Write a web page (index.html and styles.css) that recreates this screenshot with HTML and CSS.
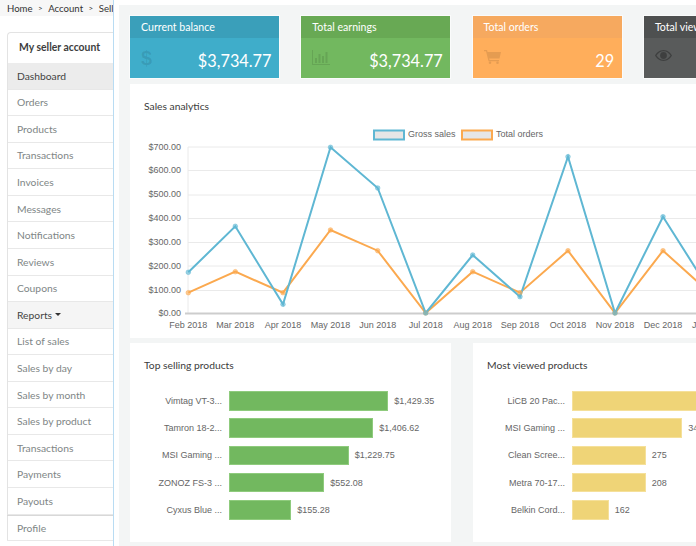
FILE: index.html
```html
<!DOCTYPE html>
<html lang="en">
<head>
<meta charset="utf-8">
<title>Seller dashboard</title>
<link rel="stylesheet" href="styles.css">
</head>
<body>
<div class="page">
  <aside class="side">
    <nav class="crumbs"><span>Home</span><i>&gt;</i><span>Account</span><i>&gt;</i><span>Sell</span></nav>
    <div class="menu">
      <h2 class="menu-head">My seller account</h2>
      <a class="item active">Dashboard</a>
      <a class="item">Orders</a>
      <a class="item">Products</a>
      <a class="item">Transactions</a>
      <a class="item">Invoices</a>
      <a class="item">Messages</a>
      <a class="item">Notifications</a>
      <a class="item">Reviews</a>
      <a class="item">Coupons</a>
      <a class="item group">Reports<b class="caret"></b></a>
      <a class="item">List of sales</a>
      <a class="item">Sales by day</a>
      <a class="item">Sales by month</a>
      <a class="item">Sales by product</a>
      <a class="item">Transactions</a>
      <a class="item">Payments</a>
      <a class="item">Payouts</a>
      <a class="item split">Profile</a>
    </div>
  </aside>
  <main class="main">
    <section class="cards">
      <div class="card blue">
        <div class="card-head">Current balance</div>
        <div class="card-body"><span class="dollar">$</span><span class="val">$3,734.77</span></div>
      </div>
      <div class="card green">
        <div class="card-head">Total earnings</div>
        <div class="card-body">
          <svg class="ico" width="18" height="15" viewBox="0 0 18 15"><path d="M0 0h1v14h17v1H0z M3 8h2v5H3z M6.5 4h2v9h-2z M10 6h2v7h-2z M13.500 2h2v11h-2z"/></svg>
          <span class="val">$3,734.77</span>
        </div>
      </div>
      <div class="card orange">
        <div class="card-head">Total orders</div>
        <div class="card-body">
          <svg class="ico" width="17" height="14" viewBox="0 0 17 14"><path d="M0 0h3l.6 2H17l-1.500 6.500H5.200l.4 1.500H15v1.200H4.500L2 1.300H0z"/><circle cx="6" cy="12.700" r="1.300"/><circle cx="13.500" cy="12.700" r="1.300"/></svg>
          <span class="val">29</span>
        </div>
      </div>
      <div class="card dark">
        <div class="card-head">Total view</div>
        <div class="card-body">
          <svg class="ico" width="17" height="11" viewBox="0 0 17 11"><path fill-rule="evenodd" d="M8.500 0C12.500 0 15.500 2.800 17 5.500 15.500 8.200 12.500 11 8.500 11S1.500 8.200 0 5.500C1.500 2.800 4.500 0 8.500 0zM8.500 1.200C5.400 1.200 3 3.300 1.500 5.500 3 7.700 5.400 9.800 8.500 9.800s5.500-2.100 7-4.300C14 3.300 11.600 1.200 8.500 1.200z"/><circle cx="8.500" cy="5.500" r="3.400"/></svg>
        </div>
      </div>
    </section>

    <section class="panel analytics">
      <h3 class="panel-title">Sales analytics</h3>
      <svg class="chart" width="566" height="214" viewBox="130 124 566 214">
        <g class="grid">
          <path d="M188 147H696M188 170.500H696M188 195H696M188 218.500H696M188 242.500H696M188 266H696M188 290.500H696M188 147V313"/>
        </g>
        <path class="axis" d="M185 313.500H696"/>
        <g class="legend">
          <rect class="box-b" x="374" y="130.500" width="30" height="9"/>
          <text x="408" y="137">Gross sales</text>
          <rect class="box-o" x="462" y="130.500" width="30" height="9"/>
          <text x="496" y="137">Total orders</text>
        </g>
        <g class="ylab">
          <text x="181" y="149.500">$700.00</text>
          <text x="181" y="173">$600.00</text>
          <text x="181" y="197">$500.00</text>
          <text x="181" y="221">$400.00</text>
          <text x="181" y="244.500">$300.00</text>
          <text x="181" y="268.500">$200.00</text>
          <text x="181" y="292.500">$100.00</text>
          <text x="181" y="316">$0.00</text>
        </g>
        <g class="xlab">
          <text x="188.300" y="327.500">Feb 2018</text>
          <text x="235.300" y="327.500">Mar 2018</text>
          <text x="283" y="327.500">Apr 2018</text>
          <text x="330.500" y="327.500">May 2018</text>
          <text x="377.700" y="327.500">Jun 2018</text>
          <text x="425.700" y="327.500">Jul 2018</text>
          <text x="472.700" y="327.500">Aug 2018</text>
          <text x="520" y="327.500">Sep 2018</text>
          <text x="568" y="327.500">Oct 2018</text>
          <text x="615" y="327.500">Nov 2018</text>
          <text x="663" y="327.500">Dec 2018</text>
          <text x="692" y="327.500" class="edge">J</text>
        </g>
        <polyline class="l-o" points="188.300,292.700 235.300,271.700 283,292.700 330.500,230 377.700,250.700 425.700,313 472.700,271.700 520,292.700 568,250.700 615,313 663,250.700 710,293"/>
        <polyline class="l-b" points="188.300,272.300 235.300,226.300 283,304.300 330.500,147.300 377.700,188 425.700,313 472.700,255 520,296.700 568,156.700 615,313 663,216.700 710,291"/>
        <g class="p-o">
          <circle cx="188.300" cy="292.700" r="2.300"/><circle cx="235.300" cy="271.700" r="2.300"/><circle cx="283" cy="292.700" r="2.300"/><circle cx="330.500" cy="230" r="2.300"/><circle cx="377.700" cy="250.700" r="2.300"/><circle cx="425.700" cy="313" r="2.300"/><circle cx="472.700" cy="271.700" r="2.300"/><circle cx="520" cy="292.700" r="2.300"/><circle cx="568" cy="250.700" r="2.300"/><circle cx="615" cy="313" r="2.300"/><circle cx="663" cy="250.700" r="2.300"/>
        </g>
        <g class="p-b">
          <circle cx="188.300" cy="272.300" r="2.300"/><circle cx="235.300" cy="226.300" r="2.300"/><circle cx="283" cy="304.300" r="2.300"/><circle cx="330.500" cy="147.300" r="2.300"/><circle cx="377.700" cy="188" r="2.300"/><circle cx="425.700" cy="313" r="2.300"/><circle cx="472.700" cy="255" r="2.300"/><circle cx="520" cy="296.700" r="2.300"/><circle cx="568" cy="156.700" r="2.300"/><circle cx="615" cy="313" r="2.300"/><circle cx="663" cy="216.700" r="2.300"/>
        </g>
      </svg>
    </section>

    <section class="lower">
      <div class="panel rank">
        <h3 class="panel-title wide">Top selling products</h3>
        <div class="bars">
          <div class="bar-row"><span class="lab">Vimtag VT-3...</span><span class="bar g" style="width:159px"></span><span class="num">$1,429.35</span></div>
          <div class="bar-row"><span class="lab">Tamron 18-2...</span><span class="bar g" style="width:144px"></span><span class="num">$1,406.62</span></div>
          <div class="bar-row"><span class="lab">MSI Gaming ...</span><span class="bar g" style="width:119.500px"></span><span class="num">$1,229.75</span></div>
          <div class="bar-row"><span class="lab">ZONOZ FS-3 ...</span><span class="bar g" style="width:95px"></span><span class="num">$552.08</span></div>
          <div class="bar-row"><span class="lab">Cyxus Blue ...</span><span class="bar g" style="width:62px"></span><span class="num">$155.28</span></div>
        </div>
      </div>
      <div class="panel rank">
        <h3 class="panel-title wide">Most viewed products</h3>
        <div class="bars">
          <div class="bar-row"><span class="lab">LiCB 20 Pac...</span><span class="bar y" style="width:159px"></span></div>
          <div class="bar-row"><span class="lab">MSI Gaming ...</span><span class="bar y" style="width:110px"></span><span class="num">34</span></div>
          <div class="bar-row"><span class="lab">Clean Scree...</span><span class="bar y" style="width:73.500px"></span><span class="num">275</span></div>
          <div class="bar-row"><span class="lab">Metra 70-17...</span><span class="bar y" style="width:73.500px"></span><span class="num">208</span></div>
          <div class="bar-row"><span class="lab">Belkin Cord...</span><span class="bar y" style="width:36.500px"></span><span class="num">162</span></div>
        </div>
      </div>
    </section>
  </main>
</div>
</body>
</html>
```

FILE: styles.css
```css
* { box-sizing: border-box; }
html, body { margin: 0; padding: 0; height: 100%; background: #fff; overflow: hidden; }
body { font-family: Lato, "Liberation Sans", sans-serif; color: #444; }
.page { display: flex; width: 696px; height: 546px; overflow: hidden; }

.side { flex: 0 0 114px; width: 114px; border-right: 1px solid #b9dcf3; overflow: hidden; }
.crumbs { display: flex; align-items: center; gap: 5.500px; height: 16px; padding-left: 7px; background: #f7f7f7; font-size: 9.600px; color: #333; white-space: nowrap; }
.crumbs i { font-style: normal; font-size: 8px; }
.menu { margin: 16px 0 0 7px; border-left: 1px solid #e3e3e3; border-top: 1px solid #e3e3e3; border-top-left-radius: 4px; }
.menu-head { margin: 0; height: 30px; padding-left: 11px; font-size: 10.400px; font-weight: 700; line-height: 29px; color: #3d3d3d; white-space: nowrap; }
.item { display: flex; align-items: center; height: 26.570px; padding-left: 9px; font-size: 10.300px; color: #808686; border-bottom: 1.500px solid #e8e8e8; white-space: nowrap; }
.active { background: #ececec; color: #444; }
.group { background: #f5f5f5; color: #444; }
.caret { display: inline-block; width: 0; height: 0; margin-left: 3px; border-left: 3px solid transparent; border-right: 3px solid transparent; border-top: 3px solid #333; }
.split { border-top: 1px solid #d8d8d8; margin-left: -1px; padding-left: 10px; }

.main { flex: 1 1 auto; min-width: 0; margin: 5px 0 0 5px; padding: 11px 0 0 11px; background: #f3f5f5; overflow: hidden; }

.cards { display: flex; gap: 22.300px; width: 720px; margin-bottom: 6px; }
.card { flex: 0 0 149px; height: 62px; color: #fff; box-shadow: 0 0 0 1px rgba(255,255,255,.55); }
.card-head { height: 22px; padding-left: 11px; font-size: 10.600px; line-height: 22px; white-space: nowrap; }
.card-body { display: flex; justify-content: space-between; align-items: flex-start; height: 40px; padding: 11px 7.500px 0 11px; }
.val { font-size: 16.300px; line-height: 24px; }
.ico { fill: rgba(0,0,0,.1); margin-top: 1px; }
.dollar { font-family: "Liberation Sans", sans-serif; font-weight: 700; font-size: 20px; line-height: 18px; color: rgba(0,0,0,.1); }
.blue { background: #3fadca; }
.blue .card-head { background: #3a9fba; }
.green { background: #72b85f; }
.green .card-head { background: #68a954; }
.orange { background: #ffae5b; }
.orange .card-head { background: #f6a95f; }
.dark { background: #595b5b; }
.dark .card-head { background: #4e5050; }
.dark .ico { fill: rgba(0,0,0,.3); }

.panel { background: #fff; }
.panel-title { margin: 0; padding: 15px 0 11px 14px; font-size: 10.300px; font-weight: 400; line-height: 14px; color: #3c3c3c; white-space: nowrap; }
.panel-title.wide { padding: 15px 0 19px 14px; }
.analytics { height: 254px; width: 566px; margin-bottom: 5px; }
.chart { display: block; }
.chart text { font-family: "Liberation Sans", sans-serif; font-size: 9px; fill: #666; }
.chart .edge { text-anchor: start; }
.grid path { fill: none; stroke: #eaeaea; stroke-width: 1; }
.axis { fill: none; stroke: #cdcdcd; stroke-width: 2; }
.ylab text { text-anchor: end; }
.xlab text { text-anchor: middle; }
.box-b { fill: #e6e6e6; stroke: #5fb7d3; stroke-width: 2; }
.box-o { fill: #e6e6e6; stroke: #fba94f; stroke-width: 2; }
.l-b { fill: none; stroke: #5fb7d3; stroke-width: 2; }
.l-o { fill: none; stroke: #fba94f; stroke-width: 2; }
.p-b circle { fill: rgba(95,183,211,.6); stroke: rgba(95,183,211,.5); stroke-width: 1; }
.p-o circle { fill: rgba(251,169,79,.6); stroke: rgba(251,169,79,.5); stroke-width: 1; }

.lower { display: flex; gap: 22px; width: 700px; }
.rank { flex: 0 0 321px; height: 199px; }
.bars { display: flex; flex-direction: column; gap: 7.800px; }
.bar-row { display: flex; align-items: center; height: 19.500px; font-family: "Liberation Sans", sans-serif; font-size: 9px; color: #666; white-space: nowrap; }
.lab { flex: 0 0 92px; text-align: right; margin-right: 7.300px; }
.bar { flex: none; height: 19.500px; }
.g { background: #72b85f; border: 1px solid #8fcb7d; }
.y { background: #efd477; border: 1px solid #f5e09a; }
.num { margin-left: 6px; }
```
